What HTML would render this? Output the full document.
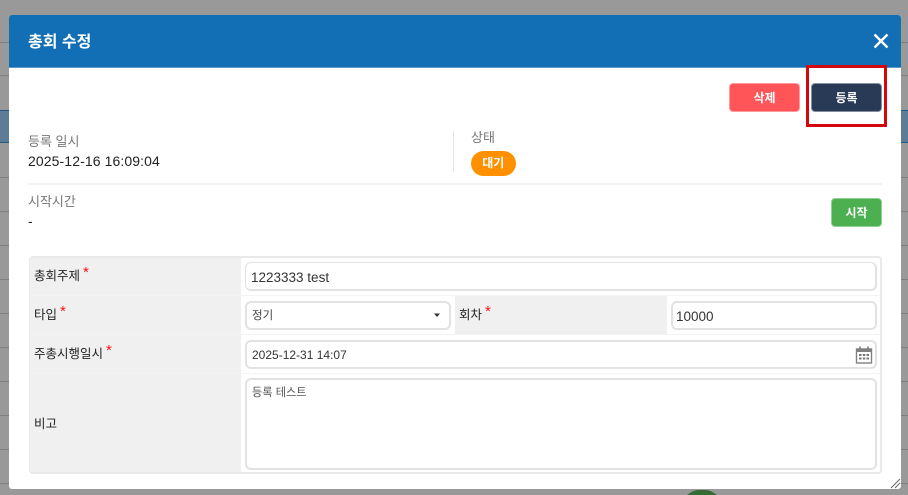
<!DOCTYPE html>
<html lang="ko">
<head>
<meta charset="utf-8">
<style>
html,body{margin:0;padding:0;width:908px;height:495px;overflow:hidden;background:#999}
body{position:relative;font-family:"Liberation Sans","Noto Sans CJK KR",sans-serif;font-size:13px;color:#222}
.a{position:absolute;box-sizing:border-box;white-space:nowrap}
.line{position:absolute;left:0;width:908px;height:1px;background:#7f7f7f}
.modal{left:9px;top:15px;width:892px;height:474px;background:#fff;border-radius:3px;overflow:hidden}
.head{left:9px;top:15px;width:892px;height:52.5px;background:#126fb5;border-radius:3px 3px 0 0;border-bottom:1px solid #5b9bd0}
.btn{color:#fff;font-size:12px;font-weight:bold;text-align:center;border-radius:4px}
.lab{color:#777;font-size:13px;line-height:18px}
.val{color:#222;font-size:14px;line-height:18px;letter-spacing:.1px}
.th{font-size:12.5px;color:#222;line-height:16px}
.th b{color:#f11;font-weight:normal;font-size:15px;position:relative;top:-3px;margin-left:3px}
.inp{background:#fff;border:2px solid #e2e2e2;border-radius:6px;font-size:13px;color:#333}
</style>
</head>
<body>
<div class="line" style="top:42px"></div>
<div class="line" style="top:75px"></div>
<div class="a" style="left:0;top:110px;width:908px;height:33px;background:#5f7c96;border-top:1px solid #1d5a8a;border-bottom:1px solid #1d5a8a"></div>
<div class="line" style="top:177px"></div>
<div class="line" style="top:211px"></div>
<div class="line" style="top:245px"></div>
<div class="line" style="top:279px"></div>
<div class="line" style="top:313px"></div>
<div class="line" style="top:347px"></div>
<div class="line" style="top:381px"></div>
<div class="line" style="top:415px"></div>
<div class="line" style="top:449px"></div>
<div class="line" style="top:483px"></div>
<div class="a" style="left:683px;top:490px;width:38px;height:20px;background:#356b35;border-radius:16px 16px 0 0"></div>

<div class="a modal"></div>
<div class="a head"></div>
<div class="a" style="left:28px;top:31px;font-size:16px;font-weight:bold;color:#fff;line-height:24px">총회 수정</div>
<svg class="a" style="left:873px;top:33px" width="16" height="16" viewBox="0 0 16 16"><path d="M1.500 1.500L14.500 14.500M14.500 1.500L1.500 14.500" stroke="#fff" stroke-width="2.400" fill="none"/></svg>

<div class="a btn" style="left:729px;top:83px;width:71px;height:29px;line-height:28px;background:#ff5558;border:1px solid #ff9a9c">삭제</div>
<div class="a btn" style="left:811px;top:83px;width:71px;height:29px;line-height:28px;background:#293a57;border:1px solid #8790a0">등록</div>
<div class="a" style="left:806px;top:64.5px;width:81px;height:62px;border:3px solid #d4070f"></div>

<div class="a lab" style="left:28px;top:133px">등록 일시</div>
<div class="a val" style="left:28px;top:152px">2025-12-16 16:09:04</div>
<div class="a" style="left:453px;top:131px;width:1px;height:41px;background:#e6e6e6"></div>
<div class="a lab" style="left:471px;top:129px">상태</div>
<div class="a btn" style="left:470.5px;top:151px;width:45.5px;height:25px;line-height:24px;background:#ff9100;border-radius:13px">대기</div>
<div class="a" style="left:28px;top:183px;width:854px;height:2px;background:#f3f3f3"></div>
<div class="a lab" style="left:28px;top:193px">시작시간</div>
<div class="a val" style="left:28px;top:212px">-</div>
<div class="a btn" style="left:831px;top:198px;width:51px;height:29px;line-height:28px;background:#4caf50;border:1px solid #8fd093">시작</div>

<div class="a" style="left:29px;top:256px;width:852.5px;height:217.5px;background:#fff;border:2px solid #e9e9e9;border-radius:4px"></div>
<div class="a" style="left:30px;top:258px;width:211px;height:214px;background:#f0f0f0"></div>
<div class="a" style="left:455px;top:296px;width:212px;height:38px;background:#f0f0f0"></div>
<div class="a" style="left:30px;top:295px;width:850px;height:1px;background:#f3f3f3"></div>
<div class="a" style="left:30px;top:334px;width:850px;height:1px;background:#f3f3f3"></div>
<div class="a" style="left:30px;top:373px;width:850px;height:1px;background:#f3f3f3"></div>

<div class="a th" style="left:34px;top:268px">총회주제<b>*</b></div>
<div class="a th" style="left:34px;top:307px">타입<b>*</b></div>
<div class="a th" style="left:34px;top:346px">주총시행일시<b>*</b></div>
<div class="a th" style="left:34px;top:416px">비고</div>
<div class="a th" style="left:459px;top:307px">회차<b>*</b></div>

<div class="a inp" style="left:245px;top:262px;width:632px;height:29px;line-height:30px;padding-left:5px;font-size:13.5px;border-width:1px 2px 2px 1px">1223333 test</div>
<div class="a inp" style="left:245px;top:301px;width:206px;height:29px;line-height:27px;padding-left:5px;font-size:11.5px;color:#444">정기</div>
<svg class="a" style="left:433px;top:313px" width="8" height="5" viewBox="0 0 8 5"><path d="M1 0.500H7L4 4Z" fill="#333"/></svg>
<div class="a inp" style="left:671px;top:301px;width:206px;height:29px;line-height:27px;padding-left:3px;font-size:13.5px">10000</div>
<div class="a inp" style="left:245px;top:340px;width:632px;height:29px;line-height:27px;padding-left:5px;font-size:12px">2025-12-31 14:07</div>
<svg class="a" style="left:855px;top:346px" width="18" height="18" viewBox="0 0 18 18">
<rect x="1.500" y="3" width="15" height="14" fill="#fff" stroke="#808080" stroke-width="1.400"/>
<rect x="1.500" y="3" width="15" height="3" fill="#808080"/>
<path d="M5 0.500V4M13 0.500V4" stroke="#808080" stroke-width="1.600"/>
<path d="M4 9h2.500M7.800 9h2.500M11.500 9h2.500M4 12.500h2.500M7.800 12.500h2.500M11.500 12.500h2.500" stroke="#777" stroke-width="2"/>
</svg>
<div class="a inp" style="left:245px;top:378px;width:632px;height:92px;padding:4px 0 0 5px;line-height:18px;font-size:11.200px;color:#555">등록 테스트</div>

<svg class="a" style="left:890px;top:478px" width="11" height="11" viewBox="0 0 11 11"><path d="M1 10L10 1M5 10L10 5" stroke="#666" stroke-width="1" fill="none"/></svg>
</body>
</html>
